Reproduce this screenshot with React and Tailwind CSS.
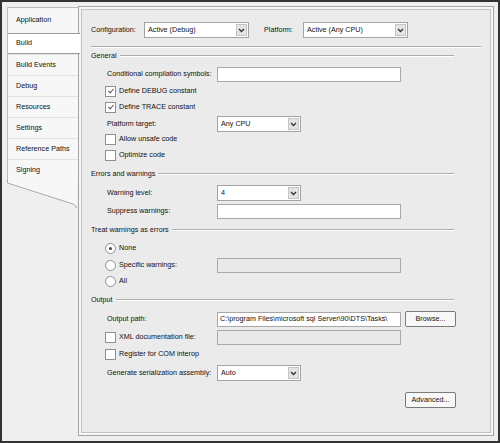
import React from 'react';

const FONT = { fontFamily: '"Liberation Sans", Arial, sans-serif' };

function Chevron() {
  return (
    <svg width="7" height="5" viewBox="0 0 7 5">
      <path d="M1 1 L3.5 3.5 L6 1" fill="none" stroke="#333" strokeWidth="1.3" />
    </svg>
  );
}

function Select({ value, width }) {
  return (
    <div className={`${width} h-[16px] bg-white border border-[#a3a3a3] flex items-center justify-between pl-[3px]`}>
      <span className="truncate">{value}</span>
      <div className="w-[11px] h-[12px] mr-[1px] bg-[#e4e4e4] border border-[#c4c4c4] flex items-center justify-center">
        <Chevron />
      </div>
    </div>
  );
}

function TextBox({ value = '', disabled = false }) {
  return (
    <div className={`w-[184px] h-[15px] border border-[#a8a8a8] flex items-center px-[2px] whitespace-nowrap overflow-hidden ${disabled ? 'bg-[#e9e9e9]' : 'bg-white'}`}>
      {value}
    </div>
  );
}

function Check({ checked }) {
  return (
    <div className="w-[11px] h-[11px] bg-white border border-[#8f8f8f] flex items-center justify-center mr-[3px]">
      {checked && (
        <svg width="8" height="8" viewBox="0 0 8 8">
          <path d="M1.5 4 L3.2 5.8 L6.5 2" fill="none" stroke="#555" strokeWidth="1.1" />
        </svg>
      )}
    </div>
  );
}

function Radio({ checked }) {
  return (
    <div className="w-[11px] h-[11px] rounded-full bg-white border border-[#8f8f8f] flex items-center justify-center mr-[3px]">
      {checked && <div className="w-[3px] h-[3px] rounded-full bg-[#444]" />}
    </div>
  );
}

function Row({ h, children }) {
  return (
    <div className={`${h} flex items-start`}>
      <div className="h-[16px] flex items-center w-full">{children}</div>
    </div>
  );
}

function Header({ h, title }) {
  return (
    <Row h={h}>
      <span className="mr-[3px]">{title}</span>
      <div className="flex-1 mr-[36px] h-[2px] border-t border-[#adadad] border-b-white border-b" />
    </Row>
  );
}

function Label({ children }) {
  return <div className="w-[126px] pl-[16px] shrink-0 whitespace-nowrap">{children}</div>;
}

const tabs = ['Application', 'Build', 'Build Events', 'Debug', 'Resources', 'Settings', 'Reference Paths', 'Signing'];

export default function App() {
  return (
    <div style={FONT} className="w-[500px] h-[443px] border-2 border-[#333] bg-[#efefef] flex pl-[5px] pt-[4px] pr-[4px] pb-[5px] text-[7.2px] text-[#111]">
      {/* tab strip */}
      <div className="w-[71px] shrink-0 flex flex-col pt-[1px]">
        <div className="bg-[#f7f7f7] border-l border-t border-[#b9b9b9]">
          {tabs.map((t, i) => (
            <div
              key={t}
              className={`flex items-center pl-[8px] ${i === 0 ? 'h-[25px]' : 'h-[21px]'} ${
                t === 'Build'
                  ? 'bg-white border-y border-[#9c9c9c] -mr-[2px] relative'
                  : i > 1 ? 'border-t border-[#e2e2e2]' : ''
              }`}
            >
              {t}
            </div>
          ))}
        </div>
        <svg width="71" height="28" viewBox="0 0 71 28" className="block">
          <path d="M0 0 L0 3 L66 24 Q70 25.5 70 28 L70 0 Z" fill="#f7f7f7" />
          <path d="M0.5 0 L0.5 3 L66 24 Q69.5 25.5 69.5 28" fill="none" stroke="#a9a9a9" strokeWidth="1" />
        </svg>
      </div>

      {/* property panel */}
      <div className="flex-1 border border-[#a4a4a4] bg-[#f6f6f6] p-[2px]">
        <div className="h-full border border-[#c2c2c2] bg-[#ebebeb] pl-[9px] pt-[12px]">
          <Row h="h-[24px]">
            <span className="w-[53px]">Configuration:</span>
            <Select value="Active (Debug)" width="w-[105px]" />
            <span className="ml-[15px] w-[39px]">Platform:</span>
            <Select value="Active (Any CPU)" width="w-[105px]" />
          </Row>
          <div className="h-[2px] mr-[9px] border-t border-[#adadad] border-b border-b-white" />
          <Header h="h-[18px]" title="General" />
          <Row h="h-[17px]">
            <Label>Conditional compilation symbols:</Label>
            <TextBox />
          </Row>
          <Row h="h-[16px]">
            <div className="pl-[14px] flex items-center"><Check checked />Define DEBUG constant</div>
          </Row>
          <Row h="h-[17px]">
            <div className="pl-[14px] flex items-center"><Check checked />Define TRACE constant</div>
          </Row>
          <Row h="h-[15px]">
            <Label>Platform target:</Label>
            <Select value="Any CPU" width="w-[84px]" />
          </Row>
          <Row h="h-[16px]">
            <div className="pl-[14px] flex items-center"><Check />Allow unsafe code</div>
          </Row>
          <Row h="h-[19px]">
            <div className="pl-[14px] flex items-center"><Check />Optimize code</div>
          </Row>
          <Header h="h-[19px]" title="Errors and warnings" />
          <Row h="h-[18px]">
            <Label>Warning level:</Label>
            <Select value="4" width="w-[84px]" />
          </Row>
          <Row h="h-[19px]">
            <Label>Suppress warnings:</Label>
            <TextBox />
          </Row>
          <Header h="h-[18px]" title="Treat warnings as errors" />
          <Row h="h-[17px]">
            <div className="pl-[14px] flex items-center"><Radio checked />None</div>
          </Row>
          <Row h="h-[16px]">
            <div className="pl-[14px] flex items-center w-[126px] shrink-0"><Radio />Specific warnings:</div>
            <TextBox disabled />
          </Row>
          <Row h="h-[19px]">
            <div className="pl-[14px] flex items-center"><Radio />All</div>
          </Row>
          <Header h="h-[19px]" title="Output" />
          <Row h="h-[18px]">
            <Label>Output path:</Label>
            <TextBox value="C:\program Files\microsoft sql Server\90\DTS\Tasks\" />
            <button className="ml-[4px] w-[51px] h-[16px] bg-[#f8f8f8] border border-[#7a7a7a] rounded-[2px]">Browse...</button>
          </Row>
          <Row h="h-[17px]">
            <div className="pl-[14px] flex items-center w-[126px] shrink-0"><Check />XML documentation file:</div>
            <TextBox disabled />
          </Row>
          <Row h="h-[19px]">
            <div className="pl-[14px] flex items-center"><Check />Register for COM interop</div>
          </Row>
          <Row h="h-[27px]">
            <Label>Generate serialization assembly:</Label>
            <Select value="Auto" width="w-[84px]" />
          </Row>
          <Row h="h-[16px]">
            <div className="flex-1" />
            <button className="mr-[34px] w-[51px] h-[16px] bg-[#f8f8f8] border border-[#7a7a7a] rounded-[2px]">Advanced...</button>
          </Row>
        </div>
      </div>
    </div>
  );
}
